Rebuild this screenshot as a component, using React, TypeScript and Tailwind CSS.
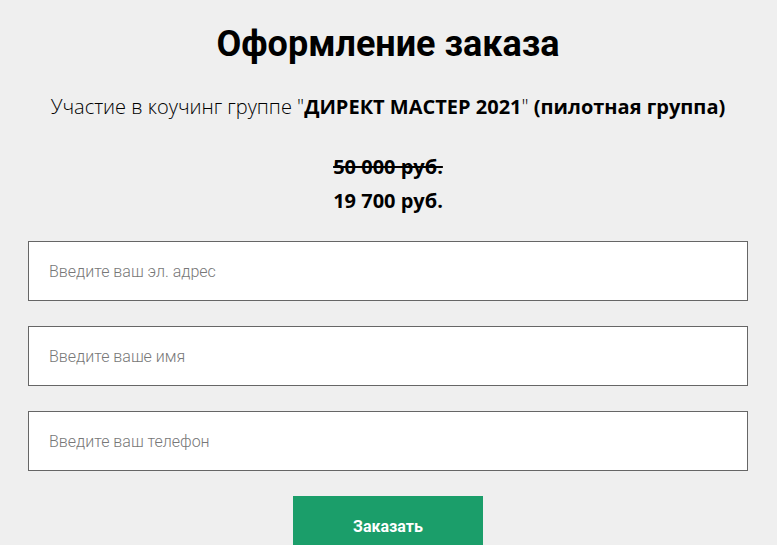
export default function App() {
  return (
    <div className="w-full min-h-[545px] bg-[#efefef] overflow-hidden">
      <div className="ml-[28px] w-[720px] pt-[22px]">
        <h1 className="text-center font-['Roboto',sans-serif] font-bold text-[36px] leading-[44px] text-black">
          Оформление заказа
        </h1>
        <p className="mt-[28px] text-center font-['Open_Sans',sans-serif] font-light text-[20px] leading-[26px] text-black whitespace-nowrap -mx-[30px]">
          Участие в коучинг группе "<b className="font-bold">ДИРЕКТ МАСТЕР 2021</b>" <b className="font-bold">(пилотная группа)</b>
        </p>
        <div className="mt-[30px] text-center font-['Open_Sans',sans-serif] font-bold text-[20px] leading-[34px] text-black">
          <div className="line-through decoration-2">50 000 руб.</div>
          <div>19 700 руб.</div>
        </div>
        <form className="mt-[23px] flex flex-col gap-[25px]">
          {["Введите ваш эл. адрес", "Введите ваше имя", "Введите ваш телефон"].map((p) => (
            <input
              key={p}
              placeholder={p}
              className="h-[60px] w-full bg-white border border-[#666] px-[20px] font-['Roboto',sans-serif] font-light text-[16px] text-black placeholder:text-[#777] outline-none"
            />
          ))}
          <div className="flex justify-center">
            <button
              type="button"
              className="w-[190px] h-[60px] bg-[#1b9e6a] pt-[2px] text-white font-['Roboto',sans-serif] font-bold text-[16px]"
            >
              Заказать
            </button>
          </div>
        </form>
      </div>
    </div>
  );
}
